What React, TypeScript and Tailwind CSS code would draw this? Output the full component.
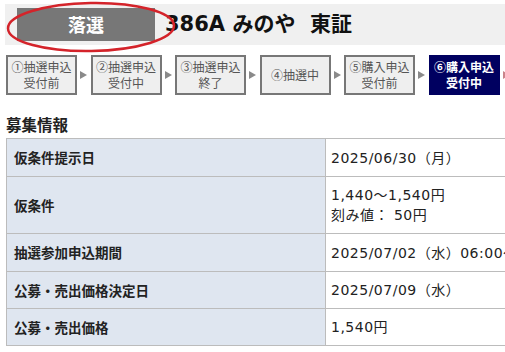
const steps = [
  { l1: '①抽選申込', l2: '受付前' },
  { l1: '②抽選申込', l2: '受付中' },
  { l1: '③抽選申込', l2: '終了' },
  { l1: '④抽選中', l2: '' },
  { l1: '⑤購入申込', l2: '受付前' },
  { l1: '⑥購入申込', l2: '受付中', active: true },
];

const rows: { label: string; value: string[]; h: string }[] = [
  { label: '仮条件提示日', value: ['2025/06/30（月）'], h: 'h-[38px]' },
  { label: '仮条件', value: ['1,440～1,540円', '刻み値： 50円'], h: 'h-[57px]' },
  { label: '抽選参加申込期間', value: ['2025/07/02（水）06:00～2025/07/08（火）'], h: 'h-[38px]' },
  { label: '公募・売出価格決定日', value: ['2025/07/09（水）'], h: 'h-[37px]' },
  { label: '公募・売出価格', value: ['1,540円'], h: 'h-[37px]' },
];

const latinFont = { fontFamily: '"DejaVu Sans", "Noto Sans CJK JP", sans-serif' };

function Arrow({ color = '#8a8a8a' }: { color?: string }) {
  return (
    <div className="w-[13.5px] shrink-0 flex items-center justify-center">
      <svg width="7" height="8" viewBox="0 0 7 8">
        <polygon points="0,0 7,4 0,8" fill={color} />
      </svg>
    </div>
  );
}

export default function App() {
  return (
    <div
      className="relative w-[505px] h-[352px] overflow-hidden bg-white"
      style={{ fontFamily: '"Noto Sans CJK JP", "Noto Sans", sans-serif' }}
    >
      {/* Header */}
      <div className="ml-[5px] mt-[4px] h-[41px] bg-[#f0f0f0] flex items-center">
        <div className="ml-[12px] w-[138px] h-[33px] bg-[#777777] flex items-center justify-center text-white font-bold text-[18px]">
          落選
        </div>
        <div className="ml-[10px] text-[21px] font-bold text-[#111]" style={latinFont}>
          386A みのや&nbsp; 東証
        </div>
      </div>

      {/* Red marker ellipse */}
      <svg className="absolute left-0 top-0" width="190" height="60" viewBox="0 0 190 60">
        <ellipse cx="91" cy="27" rx="83" ry="24" fill="none" stroke="#d4232a" strokeWidth="2.5" transform="rotate(-1 91 27)" />
      </svg>

      {/* Steps */}
      <div className="flex mt-[10px] ml-[6px]">
        {steps.map((s, i) => (
          <div key={i} className="flex">
            <div
              className={
                s.active
                  ? 'w-[71px] h-[40px] bg-[#000060] flex flex-col items-center justify-center text-white font-bold text-[12px] leading-[16px]'
                  : 'w-[71px] h-[40px] bg-[#efefef] border-2 border-[#777777] flex flex-col items-center justify-center text-[#555] text-[12px] leading-[16px]'
              }
            >
              <span>{s.l1}</span>
              {s.l2 && <span>{s.l2}</span>}
            </div>
            {i < steps.length - 1 ? <Arrow /> : null}
          </div>
        ))}
        <Arrow color="#c9848a" />
      </div>

      {/* Heading */}
      <h2 className="ml-[6px] mt-[19px] text-[15.5px] font-bold text-[#222] leading-[20px]">募集情報</h2>

      {/* Table */}
      <div className="ml-[6px] mt-[4px] w-[700px] border-t border-l border-[#bcbcbc]">
        {rows.map((r, i) => (
          <div key={i} className={`flex ${r.h} border-b border-[#bcbcbc]`}>
            <div className="w-[319px] shrink-0 bg-[#dfe6f0] border-r border-[#bcbcbc] flex items-center pl-[7px] text-[13.5px] font-bold text-[#222]">
              {r.label}
            </div>
            <div
              className="flex-1 flex flex-col justify-center pl-[5px] text-[14px] tracking-[0.5px] text-[#222] leading-[20px] whitespace-nowrap"
              style={latinFont}
            >
              {r.value.map((v, j) => (
                <span key={j}>{v}</span>
              ))}
            </div>
          </div>
        ))}
      </div>
    </div>
  );
}
